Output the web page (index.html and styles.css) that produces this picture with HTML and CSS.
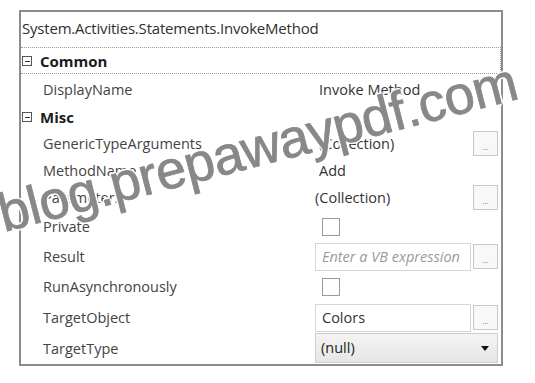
FILE: index.html
```html
<!DOCTYPE html>
<html lang="en">
<head>
    <meta charset="UTF-8">
    <meta name="viewport" content="width=device-width, initial-scale=1.0">
    <title>Properties</title>
    <link rel="stylesheet" href="styles.css">
</head>
<body>

<div class="panel">
    <div class="title">System.Activities.Statements.InvokeMethod</div>

    <div class="props">
        <div class="category focused"><span class="toggle"></span>Common</div>

        <div class="name">DisplayName</div>
        <div class="value plain">Invoke Method</div>

        <div class="category"><span class="toggle"></span>Misc</div>

        <div class="name">GenericTypeArguments</div>
        <div class="value plain">(Collection)</div>
        <button class="more">...</button>

        <div class="name">MethodName</div>
        <div class="value plain">Add</div>

        <div class="name">Parameters</div>
        <div class="value plain collection">(Collection)</div>
        <button class="more">...</button>

        <div class="name">Private</div>
        <div class="value"><span class="check"></span></div>

        <div class="name">Result</div>
        <div class="value"><span class="box hint">Enter a VB expression</span></div>
        <button class="more">...</button>

        <div class="name">RunAsynchronously</div>
        <div class="value"><span class="check"></span></div>

        <div class="name">TargetObject</div>
        <div class="value"><span class="box">Colors</span></div>
        <button class="more">...</button>

        <div class="name">TargetType</div>
        <div class="value wide"><span class="select">(null)<span class="arrow"></span></span></div>
    </div>
</div>

<div class="watermark">blog.prepawaypdf.com</div>

</body>
</html>
```

FILE: styles.css
```css
body {
    margin: 0;
    background-color: #fff;
    font-family: "Open Sans", "Noto Sans", sans-serif;
    font-size: 14.5px;
    color: #3a3a3a;
}
.panel {
    margin: 10px 0 0 19px;
    width: 480px;
    height: 352px;
    border: 2px solid #8c8c8c;
    background-color: #fff;
}
.title {
    height: 35px;
    line-height: 33px;
    padding-left: 1px;
    font-size: 15px;
    color: #303030;
    letter-spacing: -0.2px;
}
.props {
    display: grid;
    grid-template-columns: 22px 272px 156px 2px 25px 3px;
    grid-template-rows: 27px 30px 26px 27px 26px 28px 31px 29px 31px 31px 30px;
}
.category {
    grid-column: 1 / -1;
    display: flex;
    align-items: center;
    font-size: 15px;
    font-weight: bold;
    color: #1c1c1c;
}
.category.focused {
    border: 1px dotted #9a9a9a;
    border-left: none;
}
.toggle {
    position: relative;
    width: 8px;
    height: 8px;
    margin: 0 8px 0 1px;
    border: 1px solid #555;
}
.toggle::after {
    content: "";
    position: absolute;
    left: 2px;
    top: 4px;
    width: 5px;
    height: 1px;
    background-color: #333;
}
.name {
    grid-column: 2;
    display: flex;
    align-items: center;
    color: #444;
}
.value {
    grid-column: 3;
    display: flex;
    align-items: center;
}
.value.plain {
    padding-left: 4px;
    color: #333;
}
.value.collection {
    padding-left: 0;
}
.value.wide {
    grid-column: 3 / 6;
}
.more {
    grid-column: 5;
    align-self: center;
    width: 25px;
    height: 25px;
    padding: 0 0 3px;
    border: 1px solid #c8c8c8;
    background-color: #f8f8f8;
    font-size: 8px;
    line-height: 1;
    color: #666;
    display: flex;
    align-items: flex-end;
    justify-content: center;
}
.check {
    width: 16px;
    height: 16px;
    margin-left: 7px;
    border: 1px solid #9a9a9a;
    background-color: #fff;
}
.box {
    flex: 1;
    height: 26px;
    line-height: 26px;
    padding-left: 6px;
    border: 1px solid #d6d6d6;
    color: #333;
}
.box.hint {
    font-style: italic;
    color: #9a9a9a;
}
.select {
    flex: 1;
    position: relative;
    height: 28px;
    line-height: 28px;
    padding-left: 5px;
    border: 1px solid #cdcdcd;
    background: linear-gradient(#f4f4f4, #e6e6e6);
    color: #222;
}
.arrow {
    position: absolute;
    right: 8px;
    top: 12px;
    border-left: 4px solid transparent;
    border-right: 4px solid transparent;
    border-top: 5px solid #111;
}
.watermark {
    position: absolute;
    left: 4px;
    top: 186px;
    transform: rotate(-14.5deg);
    transform-origin: 0 46px;
    font-family: "Liberation Sans", Arial, sans-serif;
    font-size: 54px;
    line-height: 54px;
    letter-spacing: -0.5px;
    color: #888;
    -webkit-text-stroke: 0.8px #888;
    white-space: nowrap;
    pointer-events: none;
    text-shadow: 2px 0 #fff, -2px 0 #fff, 0 2px #fff, 0 -2px #fff,
        1px 1px #fff, -1px -1px #fff, 1px -1px #fff, -1px 1px #fff;
}
```
